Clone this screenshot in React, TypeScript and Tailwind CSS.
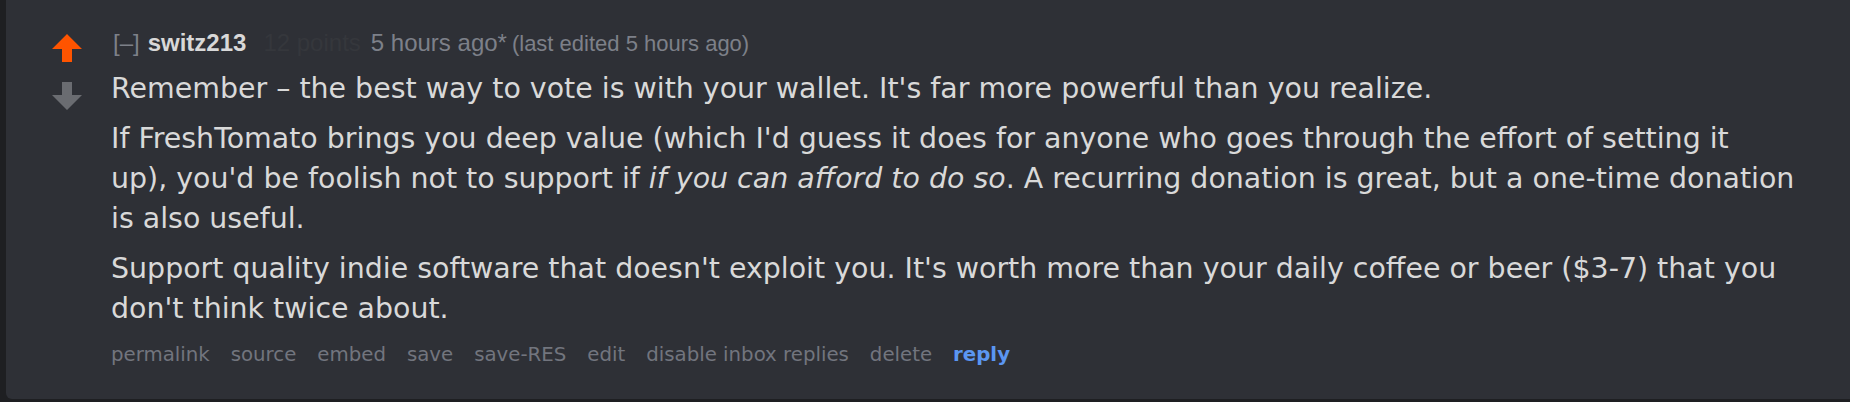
const actions = ["permalink", "source", "embed", "save", "save-RES", "edit", "disable inbox replies", "delete"];

function Arrow({ up, color }: { up?: boolean; color: string }) {
  return (
    <svg width="30" height="28" viewBox="0 0 30 28" className={up ? "" : "rotate-180"}>
      <polygon points="15,0 30,15 20,15 20,28 10,28 10,15 0,15" fill={color} />
    </svg>
  );
}

export default function App() {
  return (
    <div className="w-[1850px] h-[402px] bg-[#1e1f22] pl-[6px] pb-[3px]">
      <div className="h-full bg-[#2e3036] rounded-bl-[6px] flex">
        <div className="w-[105px] shrink-0 flex flex-col items-start pl-[46px] pt-[34px] gap-[20px]">
          <Arrow up color="#ff5400" />
          <Arrow color="#6a6c71" />
        </div>

        <div className="pt-[29px] w-[1700px]">
          <div className="flex items-baseline pl-[2px] h-[28px] leading-[28px] text-[24px] text-[#7d8089] font-['Liberation_Sans',Arial,sans-serif]">
            <span className="mr-[8px]">[–]</span>
            <span className="mr-[17px] font-bold text-[#d8d8d8]">switz213</span>
            <span className="mr-[10px] text-[#35373c]">12 points</span>
            <span>5 hours ago*</span>
            <span className="ml-[5px] text-[22px]">(last edited 5 hours ago)</span>
          </div>

          <div className="mt-[12px] text-[28.45px] leading-[40px] text-[#d9d9d9] font-['DejaVu_Sans',Verdana,sans-serif] flex flex-col gap-[10px]">
            <p>Remember – the best way to vote is with your wallet. It's far more powerful than you realize.</p>
            <p>
              If FreshTomato brings you deep value (which I'd guess it does for anyone who goes through the effort of setting it
              <br />
              up), you'd be foolish not to support if <em>if you can afford to do so</em>. A recurring donation is great, but a one-time donation
              <br />
              is also useful.
            </p>
            <p>
              Support quality indie software that doesn't exploit you. It's worth more than your daily coffee or beer ($3-7) that you
              <br />
              don't think twice about.
            </p>
          </div>

          <ul className="mt-[14px] flex items-baseline gap-[21px] text-[19.75px] leading-[24px] text-[#72757e] font-['DejaVu_Sans',Verdana,sans-serif]">
            {actions.map((a) => (
              <li key={a}>{a}</li>
            ))}
            <li className="font-bold text-[#5b96f2]">reply</li>
          </ul>
        </div>
      </div>
    </div>
  );
}
